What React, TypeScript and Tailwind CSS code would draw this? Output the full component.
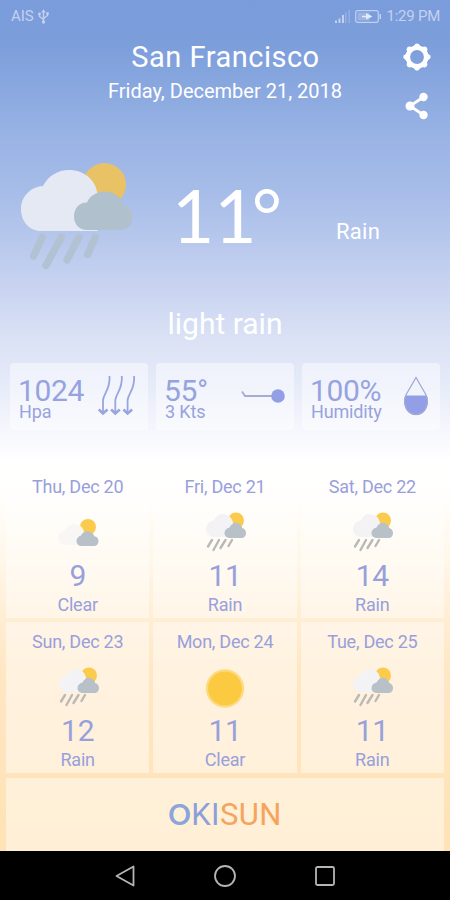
import React from 'react';

type Weather = 'cloudy' | 'rain' | 'sun';

interface Day {
  date: string;
  icon: Weather;
  temp: number;
  label: string;
}

const firstDays: Day[] = [
  { date: 'Thu, Dec 20', icon: 'cloudy', temp: 9, label: 'Clear' },
  { date: 'Fri, Dec 21', icon: 'rain', temp: 11, label: 'Rain' },
  { date: 'Sat, Dec 22', icon: 'rain', temp: 14, label: 'Rain' },
];

const nextDays: Day[] = [
  { date: 'Sun, Dec 23', icon: 'rain', temp: 12, label: 'Rain' },
  { date: 'Mon, Dec 24', icon: 'sun', temp: 11, label: 'Clear' },
  { date: 'Tue, Dec 25', icon: 'rain', temp: 11, label: 'Rain' },
];

const RainIcon: React.FC = () => (
  <svg width="112" height="110" viewBox="0 0 112 110">
    <circle cx="83.500" cy="22.500" r="21.500" fill="#e8c264" />
    <path
      d="M20 69C8 69 0 59 0 47c0-12 9-22 22-23C27 14 37 8 48 8c15 0 27 10 28.500 24v37z"
      fill="#e4e9f4"
    />
    <path
      d="M66 68c-8 0-13-6-13-13.500 0-8 5-14 13-14 3-7 10-11 18-11 9 0 16 5.500 18 13.500 6 1 9.500 6 9.500 12 0 8-5 13-12 13z"
      fill="#b0c0cd"
    />
    <g stroke="#b2c2d2" strokeWidth="7.200" strokeLinecap="round">
      <path d="M21.500 75L12.500 94M40.500 75L25 103.500M58 75L46 98M74.500 75L66.500 92.500" />
    </g>
  </svg>
);

const SmallRainIcon: React.FC = () => (
  <svg width="42" height="42" viewBox="0 0 42 42">
    <circle cx="32" cy="9.500" r="8" fill="#fbcb4d" />
    <path d="M10 26c-5 0-8-4-8-8s3-8 8-8.500C12 5 15 3 18.500 3c6 0 10 4 10.500 9v14z" fill="#f3f3f5" />
    <path
      d="M26 27c-3.500 0-5.500-2.200-5.500-5s2-5 5-5.500c1-2.700 3.500-4.800 6.500-4.800 3.200 0 5.500 2.600 6.300 5.300 2.300.6 3.700 2.500 3.700 5 0 3-2 5-4.600 5z"
      fill="#b9c1c8"
    />
    <g stroke="#bbb9b6" strokeWidth="2.400" strokeLinecap="round">
      <path d="M8 29L4 35.500M15 29L9.500 39M21.500 29L16.500 37M28 29L24.500 35" />
    </g>
  </svg>
);

const SmallCloudIcon: React.FC = () => (
  <svg width="42" height="42" viewBox="0 0 42 42">
    <circle cx="31" cy="16" r="8" fill="#fbcb4d" />
    <path d="M9 34c-5 0-8-3.500-8-7s3-7 7-7.500C10 15 14 13 17.500 13c5.500 0 9 4 9.500 8v13z" fill="#f8f7f5" />
    <path
      d="M24.500 35c-3 0-5-2.200-5-5s2-5 4.500-5.500c1-2.500 3.500-4.300 6.500-4.300 3.400 0 6 2.300 6.800 5.100 2.800.4 4.200 2.200 4.200 4.700 0 3-2 5-4.600 5z"
      fill="#b9c1c8"
    />
  </svg>
);

const SunIcon: React.FC = () => (
  <svg width="42" height="42" viewBox="0 0 42 42">
    <circle cx="21" cy="22.500" r="19.200" fill="#fddb82" />
    <circle cx="21" cy="22.500" r="17" fill="#fcca41" />
  </svg>
);

const icons: Record<Weather, React.FC> = {
  cloudy: SmallCloudIcon,
  rain: SmallRainIcon,
  sun: SunIcon,
};

const PressureIcon: React.FC = () => (
  <svg width="40" height="42" viewBox="0 0 40 42" fill="none" stroke="#99a5dd" strokeWidth="1.800">
    {[0, 12.3, 24.6].map((x) => (
      <g key={x} transform={`translate(${x} 0)`}>
        <path d="M11.500 1c1 13-5.500 17-6.500 24v13.500" />
        <path d="M.8 34.500L5 38.500l4.500-4" strokeWidth="2.600" />
      </g>
    ))}
  </svg>
);

const WindIcon: React.FC = () => (
  <svg width="44" height="16" viewBox="0 0 44 16">
    <path d="M1 3.500L4 8h30" fill="none" stroke="#a6add3" strokeWidth="1.800" />
    <circle cx="37" cy="8" r="6.800" fill="#929ee5" />
  </svg>
);

const DropIcon: React.FC = () => (
  <svg width="26" height="40" viewBox="0 0 26 40">
    <path d="M2.600 19.500h20.800c4 8-.4 19.500-10.400 19.500S-1.400 27.500 2.600 19.500z" fill="#929ee5" />
    <path
      d="M13 1.500L3.200 18.500C-1 27 4 38.500 13 38.500s14-11.500 9.800-20z"
      fill="none"
      stroke="#a1aad5"
      strokeWidth="1.300"
    />
  </svg>
);

const stats = [
  { value: '1024', unit: 'Hpa', icon: PressureIcon, pad: 'pr-2.5' },
  { value: '55°', unit: '3 Kts', icon: WindIcon, pad: 'pr-[9px]' },
  { value: '100%', unit: 'Humidity', icon: DropIcon, pad: 'pr-[11px]' },
];

const StatusBar: React.FC = () => (
  <div className="flex h-8 items-center justify-between pl-[11px] pr-[10px] text-[15px] text-[#c3d1f0]">
    <div className="flex items-center gap-1">
      <span>AIS</span>
      <svg width="11" height="15" viewBox="0 0 11 15" fill="none" stroke="currentColor" strokeWidth="1.400">
        <path d="M5.500 2v11M1.500 5v2.500l4 3M9.500 4v2.500l-4 3" />
        <path d="M3.200 3.500l2.300-3.300 2.300 3.300z" fill="currentColor" stroke="none" />
        <circle cx="1.500" cy="5" r="1.400" fill="currentColor" stroke="none" />
        <path d="M8.300 3.200h2.400v2.400H8.300z" fill="currentColor" stroke="none" />
        <circle cx="5.500" cy="13" r="1.700" fill="currentColor" stroke="none" />
      </svg>
    </div>
    <div className="flex items-center">
      <svg className="mr-1" width="17" height="13" viewBox="0 0 17 13" fill="currentColor">
        <path d="M1 10.500h2V13H1zM4.500 8.500h2V13h-2zM8 5h2v8H8z" />
        <path d="M11 2.500h1.500V13H11zM14.500 0H16v13h-1.500z" opacity=".35" />
      </svg>
      <svg className="mr-[5px]" width="27" height="13" viewBox="0 0 27 13">
        <rect x=".7" y=".7" width="22.600" height="11.600" rx="2" fill="none" stroke="currentColor" strokeWidth="1.200" />
        <path d="M2.500 2.500h12v8h-12z" fill="currentColor" opacity=".45" />
        <path d="M7 5.800h4V3l6.500 3.500L11 9.500V7.300H7z" fill="#e4ebfa" />
        <path d="M24.500 4h1.500v5h-1.500z" fill="currentColor" />
      </svg>
      <span className="tracking-[-0.25px]">1:29 PM</span>
    </div>
  </div>
);

const Header: React.FC = () => (
  <header className="grid h-[100px] grid-cols-[50px_1fr_50px] text-white">
    <div />
    <div className="text-center whitespace-nowrap">
      <h1 className="mt-[7px] pl-px text-[29px] leading-[37px] tracking-[0.5px]">San Francisco</h1>
      <p className="text-[20px] leading-[30px]">Friday, December 21, 2018</p>
    </div>
    <div className="flex flex-col items-center gap-[21px] pt-[11px] pr-[17px]">
      <svg width="28" height="28" viewBox="0 0 28 28" fill="none">
        <circle cx="14" cy="14" r="9.200" stroke="#fff" strokeWidth="4.600" />
        {[0, 45, 90, 135, 180, 225, 270, 315].map((angle) => (
          <path
            key={angle}
            d="M9.800 4.500l2.400-3.400q1.800-1.400 3.600 0l2.400 3.400z"
            transform={`rotate(${angle} 14 14)`}
            fill="#fff"
          />
        ))}
      </svg>
      <svg width="24" height="28" viewBox="0 0 24 28">
        <path d="M18.500 5L5 14l13.500 9" fill="none" stroke="#fff" strokeWidth="2.800" />
        <g fill="#fff">
          <circle cx="18.500" cy="5" r="4.200" />
          <circle cx="5" cy="14" r="4.500" />
          <circle cx="18.500" cy="23" r="4.200" />
        </g>
      </svg>
    </div>
  </header>
);

const DayCard: React.FC<{ day: Day }> = ({ day }) => {
  const Icon = icons[day.icon];
  return (
    <div className="flex flex-col items-center">
      <div className="text-[18px] leading-[22px] tracking-[-0.25px]">{day.date}</div>
      <div className="mt-[13px] h-[42px]">
        <Icon />
      </div>
      <div className="mt-[5px] text-[30px] leading-9 tracking-[-0.3px]">{day.temp}</div>
      <div className="text-[18px] leading-[22px] tracking-[-0.2px]">{day.label}</div>
    </div>
  );
};

const App: React.FC = () => {
  return (
    <div className="flex h-[900px] w-[450px] flex-col overflow-hidden font-['Roboto',sans-serif]">
      <div className="flex h-[851px] flex-col bg-[linear-gradient(180deg,#7a9cda_0px,#7c9edb_45px,#9ab4e5_140px,#a9bee9_200px,#c2cfef_270px,#dbe2f5_340px,#e6ebf9_385px,#f6f7fd_430px,#ffffff_462px,#fffefa_500px,#fff7e9_560px,#ffeed5_615px,#ffe7c4_670px,#ffe2b5_851px)]">
        <StatusBar />
        <Header />

        <section className="grid h-[168px] grid-cols-[153px_153px_1fr] text-white">
          <div className="pl-[21px] pt-[30px]">
            <RainIcon />
          </div>
          <div className="pt-[39px] pl-[19px] font-['Lato',sans-serif] text-[73px] leading-[88px]">
            11<span className="-ml-[5px]">°</span>
          </div>
          <div className="pt-[84px] pl-[30px] text-[22px] leading-8 tracking-[0.3px]">Rain</div>
        </section>

        <p className="h-[63px] pt-1 text-center text-[30px] leading-[40px] text-white">light rain</p>

        <section className="grid h-[67px] grid-cols-3 gap-2 px-[10px] text-[#97a3df]">
          {stats.map(({ value, unit, icon: Icon, pad }) => (
            <div key={unit} className={`flex items-start justify-between rounded-sm bg-white/45 pl-2 ${pad}`}>
              <div className="pt-[11px]">
                <div className="text-[30px] leading-[34px] tracking-[-0.4px]">{value}</div>
                <div className="pl-px text-[18px] leading-[8px] tracking-[-0.15px]">{unit}</div>
              </div>
              <div className="flex h-[66px] items-center">
                <Icon />
              </div>
            </div>
          ))}
        </section>

        <section className="mt-10 flex flex-col gap-1 px-[6px] text-center text-[#98a0dc]">
          <div className="grid h-[148px] grid-cols-3 gap-1 *:bg-white/45 *:pt-[6px]">
            {firstDays.map((day) => (
              <DayCard key={day.date} day={day} />
            ))}
          </div>
          <div className="grid h-[151px] grid-cols-3 gap-1 *:bg-white/45 *:pt-[9px]">
            {nextDays.map((day) => (
              <DayCard key={day.date} day={day} />
            ))}
          </div>
        </section>

        <footer className="mx-[6px] mt-[5px] flex flex-1 items-center justify-center bg-white/45">
          <p className="flex items-baseline text-[31px] leading-9 tracking-[0.4px]">
            <span className="font-['Lato',sans-serif] text-[28px] leading-none font-bold text-[#8ba5dc]">O</span>
            <span className="text-[#8c9fdb]">KI</span>
            <span className="text-[#f6a45d]">SUN</span>
          </p>
        </footer>
      </div>

      <nav className="flex h-[49px] items-center justify-center gap-[76px] bg-black">
        <svg width="24" height="24" viewBox="0 0 24 24" fill="none" stroke="#b5b5b5" strokeWidth="1.800">
          <path d="M20.500 2.500v19L3.500 12z" strokeLinejoin="round" />
        </svg>
        <svg width="24" height="24" viewBox="0 0 24 24" fill="none" stroke="#b5b5b5" strokeWidth="1.800">
          <circle cx="12" cy="12" r="10" />
        </svg>
        <svg width="24" height="24" viewBox="0 0 24 24" fill="none" stroke="#b5b5b5" strokeWidth="1.800">
          <rect x="3" y="3" width="18" height="18" rx="1.500" />
        </svg>
      </nav>
    </div>
  );
};

export default App;
